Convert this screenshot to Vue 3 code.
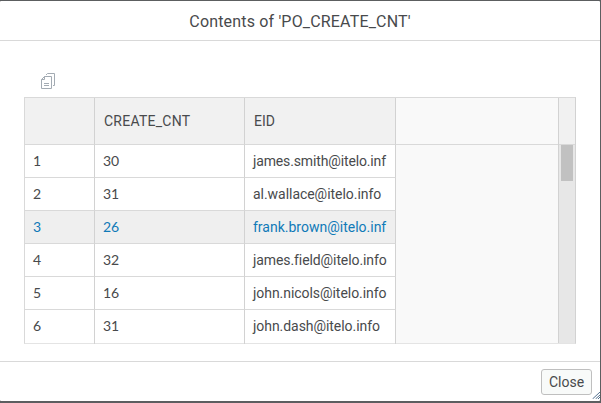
<script setup>
const rows = [
  { count: 30, id: 'james.smith@itelo.inf', fit: 'smith' },
  { count: 31, id: 'al.wallace@itelo.info', fit: 'wallace' },
  { count: 26, id: 'frank.brown@itelo.inf', fit: 'brown' },
  { count: 32, id: 'james.field@itelo.info', fit: 'field' },
  { count: 16, id: 'john.nicols@itelo.info', fit: 'nicols' },
  { count: 31, id: 'john.dash@itelo.info', fit: 'dash' },
]
const hovered = 2
</script>

<template>
  <div class="page">
    <section class="dialog">
      <header class="title"><span>Contents of 'PO_CREATE_CNT'</span></header>
      <main class="content">
        <div class="toolbar">
          <svg class="copy" width="15" height="17" viewBox="0 0 15 17" fill="none" stroke="#a3abb3">
            <path d="M3.5 3.5H10.500V15.500H.5V6.500ZM.5 6.500H3.500V3.500" />
            <path d="M5 2L6.500.5H13.500V12.500H12" />
            <path d="M3 10.500H8M3 12.500H8" />
          </svg>
        </div>
        <div class="table">
          <div class="grid">
            <div class="row head">
              <div class="cell"></div>
              <div class="cell"><span class="col-count">CREATE_CNT</span></div>
              <div class="cell"><span>EID</span></div>
            </div>
            <div v-for="(row, i) in rows" :key="i" class="row" :class="{ hovered: i === hovered }">
              <div class="cell num">{{ i + 1 }}</div>
              <div class="cell num">{{ row.count }}</div>
              <div class="cell"><span :class="row.fit">{{ row.id }}</span></div>
            </div>
          </div>
          <div class="filler"><div class="filler-head"></div></div>
          <div class="scroll">
            <div class="scroll-head"></div>
            <div class="thumb"></div>
          </div>
        </div>
      </main>
      <footer class="footer">
        <button class="close">Close</button>
      </footer>
      <svg class="grip" width="8" height="7" viewBox="0 0 8 7" stroke="#54718f" stroke-width="1">
        <path d="M.5 7L8 0M3.500 7L8 3M6 7L8 5" />
      </svg>
    </section>
  </div>
</template>

<style>
body { overflow: hidden; }
</style>

<style scoped>
* { box-sizing: border-box; }
.page { width: 601px; height: 403px; padding: 1px 1px 2px 0; background: #5c5e60; font-family: Roboto, "Liberation Sans", sans-serif; font-weight: 400; color: #484a4c; }
.dialog { position: relative; height: 400px; display: flex; flex-direction: column; background: #fff; border-radius: 1px; }
.title { height: 40px; flex: none; border-bottom: 1px solid #d9d9d9; display: flex; align-items: center; justify-content: center; font-size: 16px; letter-spacing: .17px; padding-top: 2px; }
.content { flex: none; height: 320px; padding: 32px 24px 0; }
.toolbar { height: 24px; padding-left: 17px; }
.copy { display: block; }
.table { display: flex; width: 552px; height: 247px; border: 1px solid #d9d9d9; border-bottom-color: #e4e4e4; border-right-color: #d2d2d2; }
.grid { width: 371px; flex: none; }
.row { display: grid; grid-template-columns: 70px 150px 151px; height: 33px; font-size: 14px; }
.row:last-child { height: 34px; }
.cell { border-right: 1px solid #d2d2d2; border-bottom: 1px solid #d9d9d9; padding: 0 0 1px 8px; display: flex; align-items: center; white-space: nowrap; overflow: hidden; }
.row:last-child .cell { border-bottom: 0; padding-bottom: 3px; }
.head { height: 47px; background: #f1f1f1; }
.head .cell { padding-left: 9px; }
.col-count { letter-spacing: .25px; }
.smith { letter-spacing: -.14px; }
.wallace { letter-spacing: -.04px; }
.field { letter-spacing: -.09px; }
.nicols, .dash { letter-spacing: -.05px; }
.num { font-family: Lato, Roboto, sans-serif; }
.hovered { background: #efefef; color: #107ab8; }
.filler { flex: 1; background: #f9f9f9; }
.filler-head { height: 47px; border-bottom: 1px solid #d9d9d9; }
.scroll { width: 17px; flex: none; background: #e7e7e7; border-left: 1px solid #d2d2d2; }
.scroll-head { height: 47px; background: #f1f1f1; border-bottom: 1px solid #d9d9d9; }
.thumb { width: 12px; height: 36px; margin-left: 2px; background: #c1c1c1; }
.footer { height: 40px; border-top: 1px solid #d9d9d9; display: flex; justify-content: flex-end; padding: 7px 8px 0 0; }
.close { width: 51px; height: 26px; padding: 0; border: 1px solid #bfbfbf; border-radius: 3px; background: #f8faf9; font: 14px Roboto, sans-serif; color: #484a4c; }
.grip { position: absolute; right: 0; bottom: 2px; }
</style>
